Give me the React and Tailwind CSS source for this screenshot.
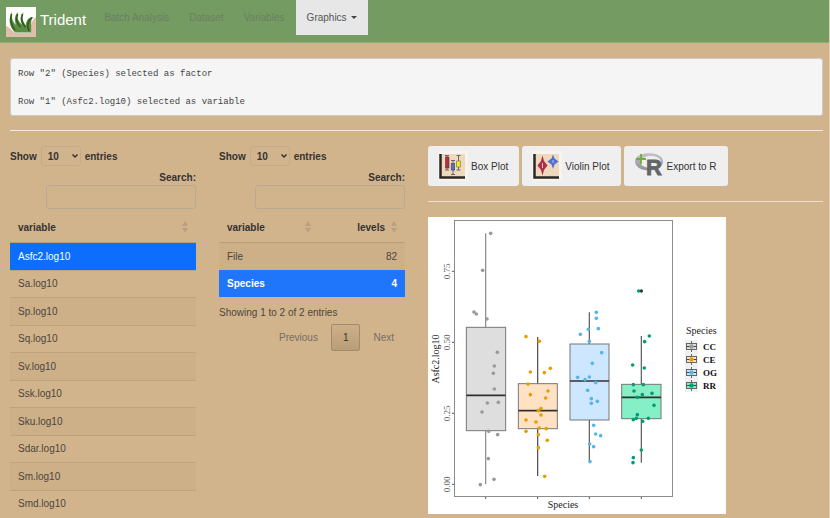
import React from "react";

const variables = [
  "Asfc2.log10", "Sa.log10", "Sp.log10", "Sq.log10", "Sv.log10",
  "Ssk.log10", "Sku.log10", "Sdar.log10", "Sm.log10", "Smd.log10",
];

// Plot geometry is stored in thirds of a pixel.
const U = 3;

const groups = [
  {
    name: "CC", fill: "#dedede", dot: "#999999", line: "#8a8a8a",
    x0: 115, x1: 233, q1: 641, q3: 331, med: 535, lo: 802, hi: 49, mid: 173,
    points: [[188,49],[164,160],[138,285],[145,291],[177,306],[208,406],[199,447],[196,469],[199,516],[178,558],[211,556],[162,585],[182,643],[209,653],[181,725],[198,787],[157,803]],
  },
  {
    name: "CE", fill: "#ffe1c4", dot: "#e69f00", line: "#4a4a4a",
    x0: 271, x1: 388, q1: 635, q3: 500, med: 581, lo: 777, hi: 360, mid: 329,
    points: [[294,359],[334,373],[367,454],[307,465],[349,467],[300,501],[360,522],[307,533],[353,543],[339,575],[331,581],[339,594],[294,609],[324,615],[334,633],[355,635],[294,643],[331,653],[358,670],[331,692],[350,778]],
  },
  {
    name: "OG", fill: "#cce7ff", dot: "#56b4e9", line: "#5a5a5a",
    x0: 426, x1: 543, q1: 609, q3: 381, med: 492, lo: 734, hi: 286, mid: 484,
    points: [[505,286],[505,304],[511,335],[481,337],[457,352],[484,373],[521,407],[493,439],[449,481],[484,480],[471,488],[503,497],[479,520],[490,545],[508,553],[490,559],[497,625],[503,651],[518,656],[485,681],[497,689],[486,734]],
  },
  {
    name: "RR", fill: "#85efc5", dot: "#009e73", line: "#5a5a5a",
    x0: 581, x1: 699, q1: 605, q3: 502, med: 541, lo: 737, hi: 357, mid: 640,
    outlier: [640, 222],
    points: [[632,222],[664,357],[650,374],[614,444],[649,453],[616,503],[646,503],[618,522],[672,529],[643,533],[628,541],[678,565],[628,593],[661,604],[625,604],[616,608],[644,613],[640,699],[616,722],[615,737]],
  },
];

const yTicks = [["0.75", 163], ["0.50", 376], ["0.25", 589], ["0.00", 802]];

function BoxPlot() {
  return (
    <svg viewBox="0 0 298 297" className="block w-[298px] max-w-full bg-white font-['Liberation_Serif',serif]" role="img" aria-label="Asfc2.log10 by Species">
      <rect x="26.5" y="3.5" width="218" height="276" fill="none" stroke="#8c8c8c" />
      {yTicks.map(([label, y]) => (
        <g key={label}>
          <line x1="24" x2="26" y1={y / U} y2={y / U} stroke="#555" />
          <text transform={`translate(22 ${y / U}) rotate(-90)`} textAnchor="middle" className="text-[9px]" fill="#666">{label}</text>
        </g>
      ))}
      {groups.map((g) => (
        <g key={g.name}>
          <line x1={g.mid / U} x2={g.mid / U} y1="280" y2="282" stroke="#555" />
          <line x1={g.mid / U} x2={g.mid / U} y1={g.hi / U} y2={g.lo / U} stroke={g.line} strokeWidth="1.2" />
          <rect x={g.x0 / U} y={g.q3 / U} width={(g.x1 - g.x0) / U} height={(g.q1 - g.q3) / U} fill={g.fill} stroke="#777" />
          <line x1={g.x0 / U} x2={g.x1 / U} y1={g.med / U} y2={g.med / U} stroke="#303030" strokeWidth="1.6" />
          {g.outlier && <circle cx={g.outlier[0] / U} cy={g.outlier[1] / U} r="1.7" fill="#333" />}
          {g.points.map(([x, y]) => (
            <circle key={`${x}-${y}`} cx={x / U} cy={y / U} r="1.8" fill={g.dot} />
          ))}
        </g>
      ))}
      <text x="135" y="291" textAnchor="middle" className="text-[10px]" fill="#222">Species</text>
      <text transform="translate(11 142) rotate(-90)" textAnchor="middle" className="text-[10px]" fill="#222">Asfc2.log10</text>
      <text x="258" y="117" className="text-[10px]" fill="#222">Species</text>
      <rect x="257" y="123" width="13" height="52" fill="#f0f0f0" />
      {groups.map((g, i) => (
        <g key={g.name} transform={`translate(257 ${123 + i * 13})`}>
          <path d="M6.500 1V12" stroke="#666" />
          <rect x="1.500" y="3.500" width="10" height="6" fill={g.fill} stroke="#666" />
          <path d="M1.500 6.500H11.500" stroke="#444" />
          <circle cx="6.500" cy="6.500" r="2.2" fill={g.dot} />
          <text x="18" y="10" className="text-[9px] font-bold" fill="#111">{g.name}</text>
        </g>
      ))}
    </svg>
  );
}

function GrassLogo() {
  return (
    <svg viewBox="0 0 30 30" className="size-[30px]" aria-hidden="true">
      <rect width="30" height="30" fill="#fdfdfb" />
      <path d="M0 19C4 20 6 24 9 26H24C24 20 25 14 30 10V30H0Z" fill="#e0bda8" />
      <path d="M9 25.500C3 20 2 11 6 5C5 11 7 15 10 18C8 12 9 8 12 5C10 11 13 15 16 17.500C14 13 14 8 18 5C15 10 17 15 20 18.500C20 14 22 10 27.500 10C23.500 13 26 20 25 25.500Z" fill="#5b8c42" />
      <path d="M9 23C5 19 4 12 5.500 7M14.500 20C10.500 16 10 11 11.500 7M19.500 20C15.500 16 15 11 16.500 7M23 24C20.500 19 22 13 26 10.500" stroke="#2f5a1d" strokeWidth="1.6" fill="none" />
    </svg>
  );
}

function BoxIcon() {
  return (
    <svg viewBox="0 0 30 30" className="size-[30px]" aria-hidden="true">
      <rect width="30" height="30" fill="#f7f3ee" />
      <rect x="2" y="3" width="25" height="24" fill="#efd9bc" />
      <path d="M2.500 3V26.500H27" stroke="#2b2823" strokeWidth="2.500" fill="none" />
      <path d="M7 4.500H11M9 4.500V19M7 19H11M13 9.500H17M15 9.500V23.500M13 23.500H17M18.500 4.500H22.500M20.500 4.500V19M18.500 19H22.500" stroke="#666" />
      <rect x="7.500" y="6" width="3.500" height="11" fill="#b32d45" stroke="#633" strokeWidth=".6" />
      <rect x="13.200" y="12.500" width="3.500" height="6.500" fill="#4d6fd6" stroke="#445" strokeWidth=".6" />
      <rect x="18.700" y="10" width="3.500" height="6" fill="#f6ef13" stroke="#665" strokeWidth=".6" />
    </svg>
  );
}

function ViolinIcon() {
  return (
    <svg viewBox="0 0 30 30" className="size-[30px]" aria-hidden="true">
      <rect width="30" height="30" fill="#f7f3ee" />
      <rect x="2" y="3" width="25" height="24" fill="#efd9bc" />
      <path d="M2.500 3V26.500H27" stroke="#2b2823" strokeWidth="2.500" fill="none" />
      <path d="M10.500 4.500L12 10L15.500 14.500L12 19L10.500 24.500L9 19L5.500 14.500L9 10Z" fill="#b32d45" />
      <path d="M21 3.500L22.500 7.500L26.500 10.500L22.500 13.500L21 18L19.500 13.500L15.500 10.500L19.500 7.500Z" fill="#4d6fd6" />
      <path d="M10.500 12V17M21 9V12" stroke="#bfc4e0" />
    </svg>
  );
}

function RIcon() {
  return (
    <svg viewBox="0 0 30 30" className="size-[30px]" aria-hidden="true">
      <defs>
        <linearGradient id="ring" x1="0" y1="0" x2="0" y2="1">
          <stop offset="0" stopColor="#c4c6c9" />
          <stop offset="1" stopColor="#8f9195" />
        </linearGradient>
      </defs>
      <path fillRule="evenodd" d="M15 2C23 2 29 5.500 29 10.500S23 19.500 15 19.500S1 15.500 1 10.500S7 2 15 2ZM17 5C11 5 6.500 7.500 6.500 11S11 17 17 17S27 14.500 27 11S23 5 17 5Z" fill="url(#ring)" />
      <text x="12" y="24" className="font-['Liberation_Sans',sans-serif] text-[22px] font-bold" fill="#636569" stroke="#636569" strokeWidth=".8">R</text>
      <path d="M7 3V13M2 8H12" stroke="#73ab35" strokeWidth="1.800" />
    </svg>
  );
}

function SortArrows() {
  return (
    <svg viewBox="0 0 6 12" className="h-3 w-[6px] shrink-0" fill="#baa07e" aria-hidden="true">
      <path d="M3 0L6 5H0ZM0 7H6L3 12Z" />
    </svg>
  );
}

function TableControls({ id }) {
  return (
    <div className="font-bold text-[#333]">
      <label className="flex h-5 items-center gap-1" htmlFor={`${id}-length`}>
        Show
        <span className="relative">
          <select id={`${id}-length`} defaultValue="10" className="block h-5 w-10 appearance-none rounded-[3px] border border-[#c2ab8b] bg-transparent pl-[6px] font-bold">
            <option>10</option>
            <option>25</option>
            <option>50</option>
          </select>
          <svg viewBox="0 0 8 6" className="pointer-events-none absolute top-[7px] right-[2px] h-[6px] w-2" fill="none" stroke="#333" strokeWidth="1.500" aria-hidden="true">
            <path d="M1.500 1.500L4 4L6.500 1.500" />
          </svg>
        </span>
        entries
      </label>
      <label className="mt-1 flex flex-col items-end" htmlFor={`${id}-search`}>
        <span className="leading-[15px]">Search:</span>
        <input id={`${id}-search`} type="search" className="h-6 w-[150px] rounded-[3px] border border-[#b9aa96] bg-transparent px-2 font-normal" />
      </label>
    </div>
  );
}

const navLink = "block px-[10px] py-[10px] leading-[15px] text-[#6c7f62]";
const plotButton = "flex h-10 items-center gap-[3px] rounded-[3px] bg-[#efefef] pr-[11px] pl-[10px] text-[#333] whitespace-nowrap";
const row = "odd:h-7 even:h-[27px] border-t border-[#c0a27c] odd:bg-[#cdaf88]";

export default function App() {
  return (
    <div className="h-screen overflow-hidden border-r border-[#dfcbb0] bg-[#d2b48c] font-['Liberation_Sans',Arial,sans-serif] text-[10px] text-[#4c453c]">
      <header className="flex h-[43px] items-start border-b border-[#93ac7c] bg-[#739b62] pl-[6px]">
        <a href="#" className="flex items-center gap-1 pt-[7px] pr-2 text-[15px] text-white">
          <GrassLogo />
          <span className="-mt-1">Trident</span>
        </a>
        <nav className="flex">
          <a href="#batch" className={navLink}>Batch Analysis</a>
          <a href="#dataset" className={navLink}>Dataset</a>
          <a href="#variables" className={navLink}>Variables</a>
          <a href="#graphics" className="ml-px flex items-center gap-1 bg-[#e7e7e7] px-[11px] py-[10px] leading-[15px] text-[#555]">
            Graphics
            <span className="border-x-[3px] border-t-[3px] border-x-transparent border-t-[#444]" />
          </a>
        </nav>
      </header>

      <main className="px-[10px] pr-[6px] pt-[15px]">
        <pre className="rounded-[3px] border border-[#ccc] bg-[#f5f5f5] px-[7px] pt-2 pb-[6px] font-['Liberation_Mono',monospace] text-[9px] leading-[14px] text-[#444]">
{`Row "2" (Species) selected as factor

Row "1" (Asfc2.log10) selected as variable`}
        </pre>
        <hr className="mt-[14px] border-[#f1e9dd]" />

        <div className="mt-[15px] grid grid-cols-4 items-start gap-[23px]">
          <section>
            <TableControls id="variables" />
            <table className="mt-1 w-full border-collapse">
              <thead>
                <tr className="h-[29px] border-b border-[#bb9d78] text-left text-[#333]">
                  <th className="px-2">
                    <div className="flex items-center justify-between">variable<SortArrows /></div>
                  </th>
                </tr>
              </thead>
              <tbody>
                {variables.map((name, i) => (
                  <tr key={name} className={i === 0 ? "h-7 bg-[#0d6efd] text-white" : row}>
                    <td className="px-2">{name}</td>
                  </tr>
                ))}
              </tbody>
            </table>
          </section>

          <section>
            <TableControls id="factors" />
            <table className="mt-1 w-full border-collapse">
              <thead>
                <tr className="h-[29px] border-b border-[#bb9d78] text-[#333]">
                  <th className="w-[54%] px-2">
                    <div className="flex items-center justify-between">variable<SortArrows /></div>
                  </th>
                  <th className="px-2">
                    <div className="flex items-center justify-end gap-[6px]">levels<SortArrows /></div>
                  </th>
                </tr>
              </thead>
              <tbody>
                <tr className={row}>
                  <td className="px-2">File</td>
                  <td className="px-2 text-right">82</td>
                </tr>
                <tr className="h-[27px] bg-[#1f76fb] font-bold text-white">
                  <td className="px-2">Species</td>
                  <td className="px-2 text-right">4</td>
                </tr>
              </tbody>
            </table>
            <p className="mt-2 leading-[15px]">Showing 1 to 2 of 2 entries</p>
            <div className="mt-1 flex justify-end gap-[2px] text-[#766d62]">
              <button type="button" className="h-[27px] px-[11px]">Previous</button>
              <button type="button" className="h-[27px] rounded-[2px] border border-[#a08b6f] bg-linear-to-b from-[#cdb089] to-[#b99d78] px-[11px] text-[#333]">1</button>
              <button type="button" className="h-[27px] px-[11px]">Next</button>
            </div>
          </section>

          <section className="col-span-2">
            <div className="flex flex-wrap gap-[3px]">
              <button type="button" className={plotButton}><BoxIcon />Box Plot</button>
              <button type="button" className={plotButton}><ViolinIcon />Violin Plot</button>
              <button type="button" className={plotButton}><RIcon />Export to R</button>
            </div>
            <hr className="mt-[15px] mb-[15px] border-[#ece0cd]" />
            <BoxPlot />
          </section>
        </div>
      </main>
    </div>
  );
}
